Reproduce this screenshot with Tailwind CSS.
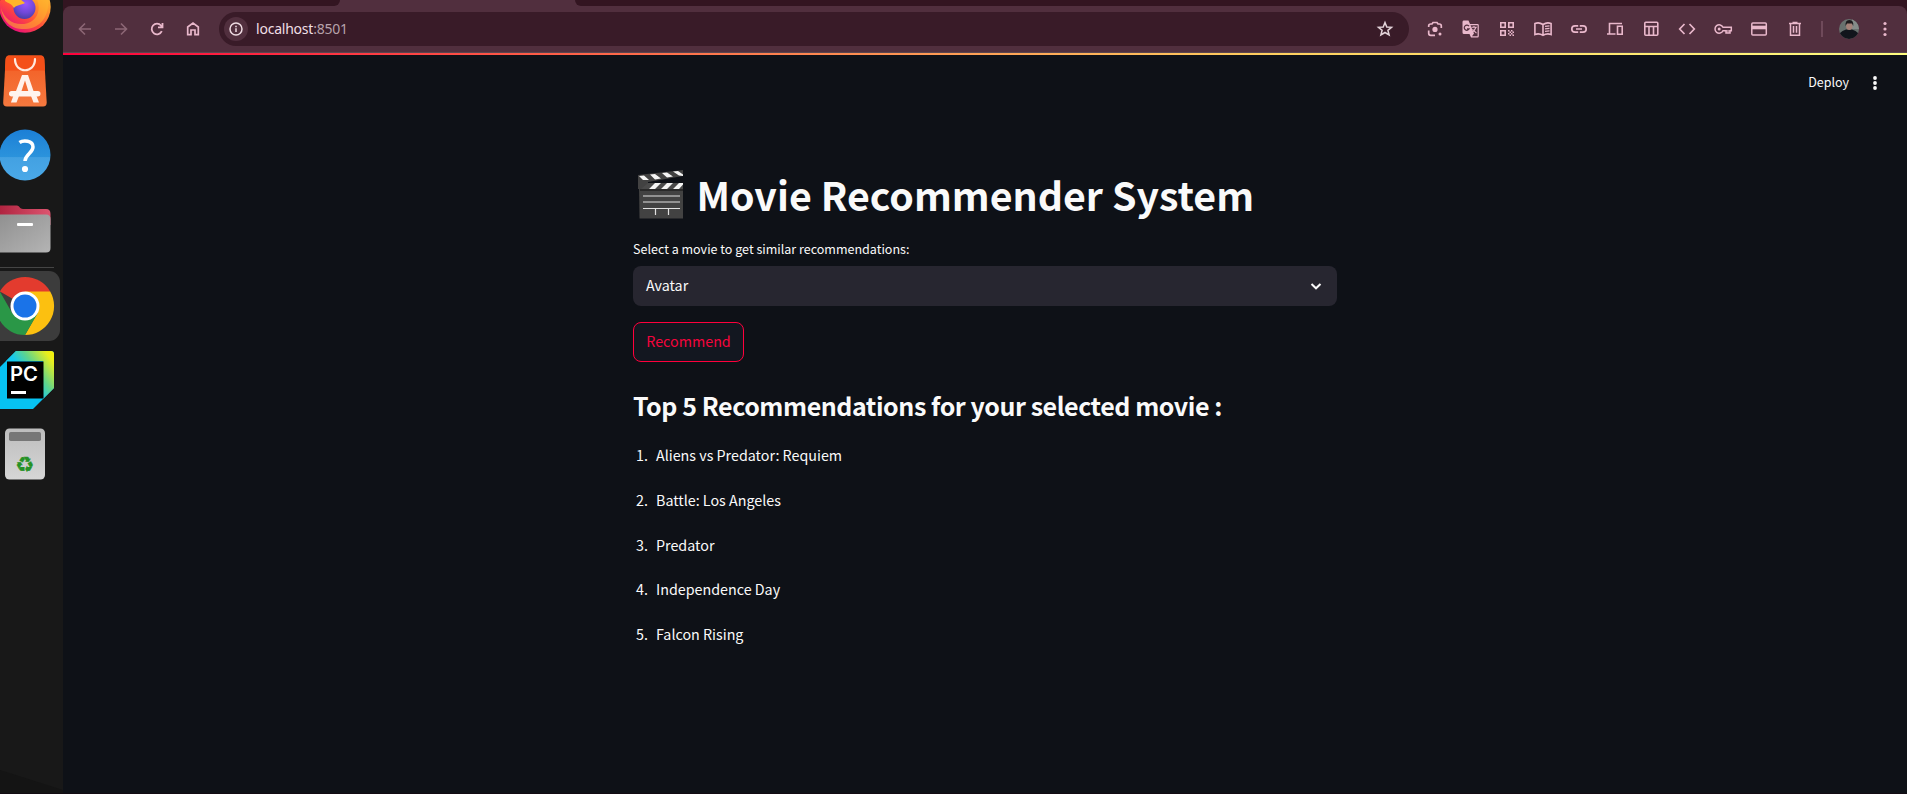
<!DOCTYPE html>
<html lang="en">
<head>
<meta charset="utf-8">
<title>Movie Recommender System</title>
<script src="https://cdn.jsdelivr.net/npm/@tailwindcss/browser@4"></script>
</head>
<body class="flex h-[794px] w-[1907px] overflow-hidden border-b border-[#120b12] bg-[#0e1117] font-['Noto_Sans_CJK_SC',sans-serif] text-[#fafafa]">

<!-- Dock -->
<aside class="h-full w-[63px] shrink-0 overflow-hidden bg-[#181818]">
<svg class="block" width="63" height="794" viewBox="0 0 63 794">
  <defs>
    <linearGradient id="ff" x1="1" y1="0" x2=".3" y2="1"><stop offset="0" stop-color="#ffe03c"/><stop offset=".4" stop-color="#ff9a2c"/><stop offset=".7" stop-color="#ff4a3c"/><stop offset="1" stop-color="#e80c7c"/></linearGradient>
    <radialGradient id="fp" cx=".55" cy=".3" r=".7"><stop offset="0" stop-color="#9a55ff"/><stop offset=".6" stop-color="#7048d8"/><stop offset="1" stop-color="#4b3fa8"/></radialGradient>
    <linearGradient id="bag" x1="0" y1="0" x2="0" y2="1"><stop offset="0" stop-color="#f25c22"/><stop offset="1" stop-color="#f5793f"/></linearGradient>
    <linearGradient id="help" x1="0" y1="0" x2="0" y2="1"><stop offset="0" stop-color="#1c7fd6"/><stop offset=".54" stop-color="#2b93dc"/><stop offset=".55" stop-color="#43a1e2"/><stop offset="1" stop-color="#4aa9e8"/></linearGradient>
    <linearGradient id="fold" x1="0" y1="0" x2="1" y2="1"><stop offset="0" stop-color="#8f8f8f"/><stop offset="1" stop-color="#b4b4b4"/></linearGradient>
    <linearGradient id="foldr" x1="0" y1="0" x2="1" y2="0"><stop offset="0" stop-color="#b02440"/><stop offset="1" stop-color="#dd5570"/></linearGradient>
    <linearGradient id="py" x1="1" y1="0" x2=".35" y2=".45"><stop offset="0" stop-color="#fcf000"/><stop offset=".2" stop-color="#e6ee20"/><stop offset=".65" stop-color="#62d48a"/><stop offset="1" stop-color="#14c8ee"/></linearGradient>
    <linearGradient id="tr" x1="0" y1="0" x2="0" y2="1"><stop offset="0" stop-color="#bdbdbd"/><stop offset="1" stop-color="#d6d6d6"/></linearGradient>
  </defs>
  <path d="M0 770L63 790V794H0Z" fill="#141414"/>
  <!-- Firefox -->
  <circle cx="25" cy="7" r="25.700" fill="url(#ff)"/>
  <path d="M36 -2C42 8 38 22 24 24C12 25 4 18 1 8C3 24 14 30 26 29C42 28 50 14 48 -2Z" fill="#ffb52e" opacity=".55"/>
  <circle cx="24.500" cy="8" r="11" fill="url(#fp)"/>
  <path d="M5 -1H20L25 3C21 5 16 5 14 8C12 4 8 3 5 1Z" fill="#ffb52a"/>
  <!-- App Center -->
  <path d="M9 55.500H40.500Q44 55.500 44.300 59L46.700 102.500Q46.800 106.500 43 106.500H7Q3 106.500 3.200 102.500L5.600 59Q6 55.500 9 55.500Z" fill="url(#bag)"/>
  <path d="M5.500 60Q6 55.500 9 55.500H41Q44 55.500 44.400 60L45 70.500H5Z" fill="#f44f18"/>
  <path d="M15 59C15 74 35 74 35 59" fill="none" stroke="#ffe9df" stroke-width="2.200" stroke-linecap="round"/>
  <path d="M22 75H28L33.500 91H28.300L25 80.500L21.500 91H16Z M13.300 96H19L16.500 102.500H10.900Z M31 96H36.500L39 102.500H33.500Z" fill="#fff1ea"/>
  <rect x="9" y="91" width="31.500" height="5.500" rx="2.700" fill="#fff4ee"/>
  <!-- Help -->
  <circle cx="25" cy="155" r="25.500" fill="url(#help)"/>
  <path d="M19.500 142.500C23 140 33 140 33 147C33 153 25.500 154 25 161" fill="none" stroke="#fff" stroke-width="3.500"/>
  <circle cx="25" cy="169" r="3.100" fill="#fff"/>
  <!-- Files -->
  <path d="M0 205.500H17C19 205.500 20 209 23 209H46Q50.500 209 50.500 214V225H0Z" fill="url(#foldr)"/>
  <path d="M-4 220Q-4 214.500 1 214.500H46Q50.500 214.500 50.500 219V248Q50.500 252.500 46 252.500H1Q-4 252.500 -4 248Z" fill="url(#fold)"/>
  <rect x="17" y="223" width="16" height="3" rx="1" fill="#fff"/>
  <rect x="0" y="267" width="54" height="1" fill="#454545"/>
  <!-- Chrome -->
  <rect x="-10" y="271" width="70" height="70" rx="11" fill="#3c3c3c"/>
  <path d="M25 306L-.1 291.500A29 29 0 0 1 50.200 291.500Z" fill="#e33b2e"/>
  <path d="M25 291.500H50.200A29 29 0 0 1 25 335L37.500 313Z" fill="#fcc010"/>
  <path d="M-.2 291.500A29 29 0 0 0 25 335L37.700 313.300L12.300 313.300Z" fill="#2a9747"/>
  <circle cx="25" cy="306" r="14.500" fill="#fff"/><circle cx="25" cy="306" r="11.500" fill="#1a73e8"/>
  <!-- PyCharm -->
  <path d="M16 351H51Q54 351 54 354V388L33 409H0V367Z" fill="#07c3f2"/>
  <path d="M16 351H51Q54 351 54 354V388L43 399V361H6Z" fill="url(#py)"/>
  <rect x="7" y="361.500" width="36.500" height="37" fill="#000"/>
  <text x="10" y="380.500" font-family="Inter, sans-serif" font-weight="600" font-size="19.500" textLength="28" lengthAdjust="spacingAndGlyphs" fill="#fff">PC</text>
  <rect x="11" y="391" width="15" height="3" fill="#fff"/>
  <!-- Trash -->
  <rect x="5" y="428.500" width="40" height="51" rx="4.500" fill="url(#tr)"/>
  <rect x="9" y="432" width="32" height="9" rx="1.800" fill="#777"/>
  <text x="25" y="471.500" text-anchor="middle" font-family="DejaVu Sans, sans-serif" font-size="21.500" fill="#259225" stroke="#259225" stroke-width=".3">♻</text>
</svg>
</aside>

<div class="flex min-w-0 grow flex-col">
  <!-- Tab strip -->
  <div class="flex h-[6px] bg-[#512f3e]">
    <div class="w-[277px] rounded-br-[6px] bg-[#331521]"></div>
    <div class="w-[235px]"></div>
    <div class="grow rounded-bl-[6px] bg-[#331521]"></div>
  </div>
  <!-- Toolbar -->
  <div class="bg-[#331521]">
  <div class="flex h-[46px] items-center rounded-t-[8px] bg-[#512f3e] text-[#e9b8cb]">
    <div class="ml-1 flex w-[152px] shrink-0">
      <svg class="mx-2 text-[#8c6775]" width="20" height="20" viewBox="0 0 20 20" fill="none" stroke="currentColor" stroke-width="1.600"><path d="M16 10H5M10 4.500L4.500 10L10 15.500"/></svg>
      <svg class="mx-2 text-[#8c6775]" width="20" height="20" viewBox="0 0 20 20" fill="none" stroke="currentColor" stroke-width="1.600"><path d="M4 10H15M10 4.500L15.500 10L10 15.500"/></svg>
      <svg class="mx-2" width="20" height="20" viewBox="0 0 20 20" fill="none" stroke="currentColor" stroke-width="1.800"><path d="M14.800 12.200A5.300 5.300 0 1 1 14 6.500L15 8M15.500 4V8.400H11"/></svg>
      <svg class="mx-2" width="20" height="20" viewBox="0 0 20 20" fill="none" stroke="currentColor" stroke-width="1.700"><path d="M4.700 8L10 4L15.300 8V15.700H12V11H8V15.700H4.700Z"/></svg>
    </div>
    <div class="flex h-[34px] w-[1190px] shrink-0 items-center rounded-full bg-[#391b28] pr-[14px] pl-[5px]">
      <div class="flex size-6 items-center justify-center rounded-full bg-[#512f3e]">
        <svg width="16" height="16" viewBox="0 0 16 16" fill="none" stroke="#efdce3" stroke-width="1.500"><circle cx="8" cy="8" r="6"/><path d="M8 7.200V11M8 4.800V6.200"/></svg>
      </div>
      <div class="ml-[8px] grow font-['Noto_Sans',sans-serif] text-[14px] leading-5 tracking-[-0.22px] text-[#f0dfe5]">localhost<span class="text-[#b7a2aa]">:8501</span></div>
      <svg width="20" height="20" viewBox="0 0 20 20" fill="none" stroke="#e3d3d9" stroke-width="1.500"><path d="M10 3.600L11.800 8L16.500 8.300L12.900 11.300L14.100 16L10 13.500L5.900 16L7.100 11.300L3.500 8.300L8.200 8Z"/></svg>
    </div>
    <div class="ml-[8px] flex shrink-0 items-center">
      <svg class="mx-2" width="20" height="20" viewBox="0 0 20 20" fill="none" stroke="currentColor" stroke-width="1.700"><path d="M3.700 8V7Q3.700 5 5.700 5H7L8 3.500H12L13 5H14.300Q16.300 5 16.300 7V9M3.700 11.500V14.300Q3.700 16.300 5.700 16.300H10"/><circle cx="10" cy="10.400" r="2.600" fill="currentColor" stroke="none"/><circle cx="15" cy="15" r="1.500" fill="currentColor" stroke="none"/></svg>
      <svg class="mx-2" width="20" height="20" viewBox="0 0 20 20"><path d="M2.500 1.500H7.500L9 5H16.500Q17.800 5 17.800 6.300V17Q17.800 18.500 16.500 18.500H10L8.500 15H3Q1.500 15 1.500 13.500V3Q1.500 1.500 2.500 1.500Z" fill="currentColor"/><path d="M9.500 6.200H16.600V17.200H11L13 14.500Z" fill="#512f3e"/><path d="M8 7.200A2.600 2.600 0 1 0 8.200 9.800H6" fill="none" stroke="#512f3e" stroke-width="1.200"/><path d="M10.500 8.300H15.800M13 7V8.300M14.800 8.500C14 11 12.500 12.500 11 13.300M11.500 10.300L15.500 14.200" fill="none" stroke="currentColor" stroke-width="1.100"/></svg>
      <svg class="mx-2" width="20" height="20" viewBox="0 0 20 20"><path d="M3.800 3.800H8.200V8.200H3.800ZM11.800 3.800H16.200V8.200H11.800ZM3.800 11.800H8.200V16.200H3.800Z" fill="none" stroke="currentColor" stroke-width="1.600"/><path d="M11 11h1.500v1.500H11zM14 11h1.500v1.500H14zM12.500 12.500H14V14h-1.500zM15.500 12.500H17V14h-1.500zM11 14h1.500v1.500H11zM14 14h1.500v1.500H14zM12.500 15.500H14V17h-1.500zM15.500 15.500H17V17h-1.500z" fill="currentColor"/></svg>
      <svg class="mx-2" width="20" height="20" viewBox="0 0 20 20" fill="none" stroke="currentColor" stroke-width="1.600"><path d="M10 5.500Q6 2.800 1.900 4.500V15.500Q6 14 10 16.300Q14 14 18.100 15.500V4.500Q14 2.800 10 5.500V16.300"/><path d="M12 7.300L16.500 6.800M12 9.800L16.500 9.300M12 12.300L16.500 11.800" stroke-width="1.300"/></svg>
      <svg class="mx-2" width="20" height="20" viewBox="0 0 20 20" fill="none" stroke="currentColor" stroke-width="1.700"><path d="M9.200 13.200H6A3.200 3.200 0 0 1 6 6.800H9.200M10.800 6.800H14A3.200 3.200 0 0 1 14 13.200H10.800M7 10H13"/></svg>
      <svg class="mx-2" width="20" height="20" viewBox="0 0 20 20" fill="none" stroke="currentColor" stroke-width="1.600"><path d="M17 4.500H4.500V14.500M2 15H10.500"/><path d="M12.500 7.300H17.200V15.200H12.500Z"/></svg>
      <svg class="mx-2" width="20" height="20" viewBox="0 0 20 20" fill="none" stroke="currentColor" stroke-width="1.600"><rect x="3.800" y="3.300" width="13" height="13" rx="1"/><path d="M4 7.500H16.500M8 7.500V16M12.500 7.500V16"/></svg>
      <svg class="mx-2" width="20" height="20" viewBox="0 0 20 20" fill="none" stroke="currentColor" stroke-width="1.700"><path d="M7.500 5L2.700 10L7.500 15M12.500 5L17.300 10L12.500 15"/></svg>
      <svg class="mx-2" width="20" height="20" viewBox="0 0 20 20" fill="none" stroke="currentColor" stroke-width="1.500"><path d="M10 8.200A4.200 4.200 0 1 0 10 11.800H13V14H17V11.800H18.300V8.200Z"/><circle cx="6.200" cy="10" r="1.500" fill="currentColor" stroke="none"/><path d="M14 11V13.500M16 11V13.500" stroke-width="1.200"/></svg>
      <svg class="mx-2" width="20" height="20" viewBox="0 0 20 20"><rect x="2.800" y="4" width="14.500" height="12" rx="1" fill="none" stroke="currentColor" stroke-width="1.500"/><rect x="3" y="6.700" width="14" height="3.600" fill="currentColor"/></svg>
      <svg class="mx-2" width="20" height="20" viewBox="0 0 20 20" fill="none" stroke="currentColor" stroke-width="1.500"><path d="M4 4.500H16M7.500 3.600H12.500M5.500 4.500V16.200H14.500V4.500M8.500 7V13.800M11.500 7V13.800"/></svg>
      <div class="mx-[8px] h-4 w-[2px] bg-[#6f4a5a]"></div>
      <svg class="mx-[8px]" width="20" height="20" viewBox="0 0 20 20"><defs><clipPath id="av"><circle cx="10" cy="10" r="10"/></clipPath></defs><g clip-path="url(#av)"><rect width="20" height="20" fill="#68716e"/><rect x="13" width="7" height="10" fill="#858c89"/><path d="M1 20V14Q3 11.500 7 10.500H13Q17 11.500 19 14V20Z" fill="#11151c"/><ellipse cx="10.300" cy="7" rx="3.200" ry="4" fill="#a58278"/><path d="M6.500 7Q6 1 10.300 1Q15 1 14.200 7L13 4.500H8Z" fill="#1c1b1d"/></g></svg>
      <svg class="mx-2" width="20" height="20" viewBox="0 0 20 20" fill="currentColor"><circle cx="10" cy="4.500" r="1.600"/><circle cx="10" cy="10" r="1.600"/><circle cx="10" cy="15.500" r="1.600"/></svg>
    </div>
  </div>
  </div>
  <div class="h-[1px] shrink-0 bg-[#5a4650]"></div>
  <div class="h-[2px] shrink-0 bg-linear-[90deg,#ff003c,#ff5a47_25%,#ffd060_66%,#fffd80]"></div>

  <header class="flex h-[55px] items-center justify-end pr-[22px]">
    <span class="mb-[2px] text-[12.500px] leading-5">Deploy</span>
    <svg class="ml-[16px]" width="20" height="20" viewBox="0 0 20 20" fill="#fafafa"><circle cx="10" cy="5" r="1.900"/><circle cx="10" cy="10" r="1.900"/><circle cx="10" cy="15" r="1.900"/></svg>
  </header>

  <main class="ml-[570px] w-[704px] pt-[57px]">
    <h1 class="flex h-[53px] items-center text-[39.300px] leading-[53px] font-bold">
      <svg class="ml-[5px] shrink-0" width="46" height="50" viewBox="0 0 46 50">
        <path d="M1 17H45V49.500H1.500Z" fill="#424242"/>
        <path d="M0 6L45 1V7L10 13V20H0Z" fill="#424242"/>
        <path d="M10 14H45V20H3Z" fill="#4a4a4a"/>
        <path d="M1 7L6 6.500L11 11L5 11ZM12 5.500L17 5L23 9.500L17 10.500ZM24 4L29 3.500L35 7.500L29 8.500ZM35 2.500L40 2L45 5.500V7L41 6.500Z" fill="#f5f5f5"/>
        <path d="M17 14H23L17 20H11ZM29 14H35L29 20H23ZM41 14H45V15.500L41 20H35Z" fill="#f5f5f5"/>
        <path d="M2 21H45" stroke="#111" stroke-width="1.200"/>
        <path d="M5 27H42M5 33H42M5 39.500H42M17.500 39.500V46M30.500 39.500V46" stroke="#e0e0e0" stroke-width="1.200" fill="none"/>
      </svg>
      <span class="ml-[12.500px] whitespace-nowrap">Movie Recommender System</span>
    </h1>
    <div class="mt-[19px] h-[20px] text-[12.530px] leading-[20px]">Select a movie to get similar recommendations:</div>
    <div class="mt-[7px] flex h-10 items-center justify-between rounded-lg bg-[#272630] pr-[12px] pl-[13px] text-[14.300px]">
      <span class="mb-[2px]">Avatar</span>
      <svg width="18" height="18" viewBox="0 0 18 18" fill="none" stroke="#fafafa" stroke-width="2"><path d="M4.500 7L9 11.300L13.500 7"/></svg>
    </div>
    <button class="mt-4 flex h-10 w-[111px] items-center justify-center rounded-lg border border-[#ff003c] bg-[#131720] pb-[2px] text-[14.300px] text-[#f5043c]">Recommend</button>
    <h3 class="mt-[25px] h-[36px] text-[25px] leading-[36px] font-bold tracking-[-0.440px] whitespace-nowrap">Top 5 Recommendations for your selected movie :</h3>
    <ol class="mt-[20px] text-[14.310px] leading-[24px]">
      <li class="flex h-[44.750px]"><span class="w-[23px] pl-[3px]">1.</span><span>Aliens vs Predator: Requiem</span></li>
      <li class="flex h-[44.750px]"><span class="w-[23px] pl-[3px]">2.</span><span>Battle: Los Angeles</span></li>
      <li class="flex h-[44.750px]"><span class="w-[23px] pl-[3px]">3.</span><span>Predator</span></li>
      <li class="flex h-[44.750px]"><span class="w-[23px] pl-[3px]">4.</span><span>Independence Day</span></li>
      <li class="flex h-[44.750px]"><span class="w-[23px] pl-[3px]">5.</span><span>Falcon Rising</span></li>
    </ol>
  </main>
</div>
</body>
</html>
